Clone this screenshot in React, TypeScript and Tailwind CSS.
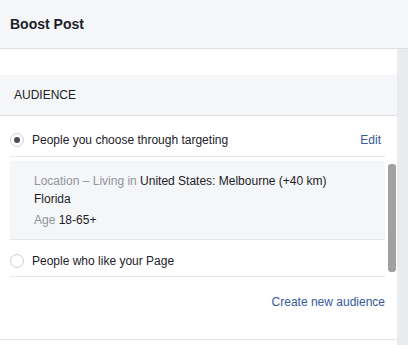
import React from "react";

function Radio({ checked }: { checked?: boolean }) {
  return (
    <span className="flex h-[14px] w-[14px] shrink-0 items-center justify-center rounded-full border border-[#ccd0d5] bg-white">
      {checked && <span className="h-[6px] w-[6px] rounded-full bg-[#4b4f56]" />}
    </span>
  );
}

export default function App() {
  return (
    <div className="h-[345px] w-[408px] overflow-hidden bg-white text-[12px] text-[#1d2129] [font-family:'Liberation_Sans',Arial,sans-serif]">
      <div className="flex h-[49px] items-center border-b border-[#dddfe2] bg-[#f5f6f7] px-[10px]">
        <span className="text-[14px] font-bold">Boost Post</span>
      </div>

      <div className="flex h-[296px]">
        <div className="relative w-[397px]">
          <div className="h-[26px]" />
          <div className="flex h-[41px] items-center border-b border-[#dddfe2] bg-[#f5f6f7] pl-[14px] text-[12px] uppercase text-[#1d2129]">
            Audience
          </div>

          <div className="w-[385px] pl-[10px]">
            <div className="flex items-center border-b border-[#e5e6e9] pt-[16px] pb-[8px] pr-[4px] leading-[16px]">
              <Radio checked />
              <span className="ml-[8px] flex-1">People you choose through targeting</span>
              <span className="text-[#365899]">Edit</span>
            </div>

            <div className="mt-[4px] border-b border-[#e5e6e9] bg-[#f5f6f7] pt-[11px] pb-[10px] pl-[24px] leading-[18px]">
              <div>
                <span className="text-[#90949c]">Location – Living in </span>
                United States: Melbourne (+40 km)
              </div>
              <div>Florida</div>
              <div className="mt-[3px]">
                <span className="text-[#90949c]">Age </span>18-65+
              </div>
            </div>

            <div className="flex items-center border-b border-[#e5e6e9] pt-[13px] pb-[7px] leading-[16px]">
              <Radio />
              <span className="ml-[8px]">People who like your Page</span>
            </div>

            <div className="mt-[17px] text-right leading-[16px] text-[#365899]">Create new audience</div>
          </div>

          <div className="mt-[29px] border-b border-[#e5e6e9]" />

          <div className="absolute right-[1px] top-[115px] h-[108px] w-[8px] rounded-[3px] bg-[#a1a1a1]" />
        </div>
        <div className="flex-1 bg-[#e9ebee]" />
      </div>
    </div>
  );
}
